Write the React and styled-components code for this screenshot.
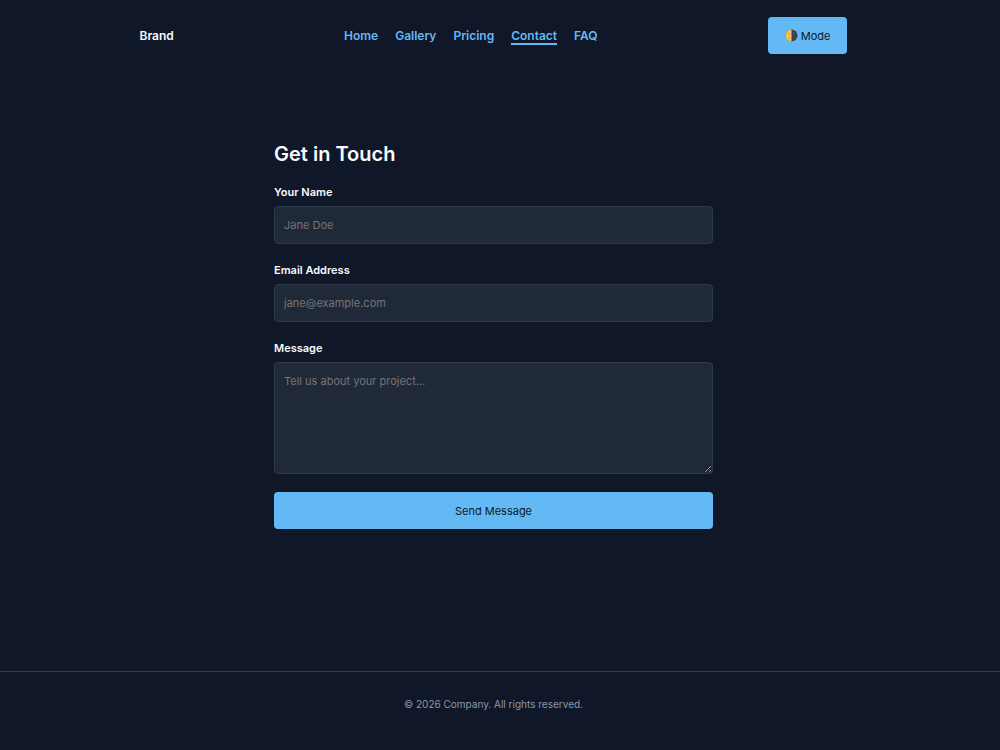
import React, { useState } from 'react';
import styled, { createGlobalStyle } from 'styled-components';

const GlobalStyle = createGlobalStyle`
* {
    box-sizing: border-box;
}
body {
    margin: 0;
    background: #101729;
    color: #f8fafc;
    font-family: Inter, "Liberation Sans", sans-serif;
    font-size: 12px;
    line-height: 18px;
}
button, input, textarea {
    font: inherit;
}
`

const Page = styled.div`
display: flex;
flex-direction: column;
min-height: 100vh;
color-scheme: ${(props) => props.$dark ? "dark" : "light"};
`

const Header = styled.header`
padding: 17px 13px 17px 0;
`

const Navbar = styled.div`
display: flex;
align-items: center;
justify-content: space-between;
width: 100%;
max-width: 708px;
margin: 0 auto;
`

const Brand = styled.div`
font-weight: 600;
`

const Nav = styled.nav`
display: flex;
gap: 17px;
`

const NavLink = styled.a`
padding-top: 2px;
color: #63b9f3;
font-weight: 600;
line-height: 14px;
text-decoration: none;
border-bottom: 2px solid ${(props) => props.$active ? "#63b9f3" : "transparent"};
`

const Button = styled.button`
display: flex;
align-items: center;
justify-content: center;
gap: 3px;
height: 37px;
padding: 0 17px;
border: none;
border-radius: 4px;
background: #63b9f3;
color: #101729;
font-size: 11px;
cursor: pointer;
`

const Main = styled.main`
flex: 1;
padding: 67px 13px 72px 0;
`

const Form = styled.form`
display: flex;
flex-direction: column;
gap: 18px;
width: 100%;
max-width: 439px;
margin: 0 auto;
`

const Title = styled.h1`
margin: 0 0 -4px;
font-size: 20px;
line-height: 32px;
font-weight: 600;
`

const Field = styled.div`
display: flex;
flex-direction: column;
gap: 5px;
`

const Label = styled.label`
font-size: 11px;
line-height: 17px;
font-weight: 600;
`

const Input = styled.input`
width: 100%;
height: 38px;
padding: 9px;
border: 1px solid #2f3a4a;
border-radius: 4px;
background: #202938;
color: #f8fafc;
font-size: 11px;

&::placeholder {
    color: #757575;
}
`

const TextArea = styled(Input)`
height: 112px;
resize: vertical;
`

const Footer = styled.footer`
padding: 24px 13px 37px 0;
border-top: 1px solid #2f3a4a;
color: #8c97a9;
font-size: 10px;
line-height: 17px;
text-align: center;
`

const links = ["Home", "Gallery", "Pricing", "Contact", "FAQ"];

function MoonIcon() {
    return (
        <svg width="13" height="13" viewBox="0 0 24 24" aria-hidden="true">
            <circle cx="12" cy="12" r="11" fill="#354052" />
            <path d="M12 1a11 11 0 0 0 0 22z" fill="#f4c84c" />
            <circle cx="7" cy="9" r="2" fill="#dca938" />
            <circle cx="8" cy="17" r="2" fill="#e2ae3c" />
            <circle cx="16" cy="8" r="2" fill="#4b5565" />
            <circle cx="17" cy="16" r="2" fill="#465062" />
        </svg>
    )
}

function App() {
    const [dark, setDark] = useState(true);

    return (
        <Page $dark={dark}>
            <GlobalStyle />
            <Header>
                <Navbar>
                    <Brand>Brand</Brand>
                    <Nav>
                        {links.map((link) => (
                            <NavLink key={link} href={"#" + link.toLowerCase()} $active={link === "Contact"}>{link}</NavLink>
                        ))}
                    </Nav>
                    <Button type="button" onClick={() => setDark(!dark)}><MoonIcon />Mode</Button>
                </Navbar>
            </Header>

            <Main>
                <Form onSubmit={(e) => e.preventDefault()}>
                    <Title>Get in Touch</Title>
                    <Field>
                        <Label htmlFor="name">Your Name</Label>
                        <Input id="name" type="text" placeholder="Jane Doe" />
                    </Field>
                    <Field>
                        <Label htmlFor="email">Email Address</Label>
                        <Input id="email" type="email" placeholder="jane@example.com" />
                    </Field>
                    <Field>
                        <Label htmlFor="message">Message</Label>
                        <TextArea as="textarea" id="message" placeholder="Tell us about your project..." />
                    </Field>
                    <Button type="submit">Send Message</Button>
                </Form>
            </Main>

            <Footer>© 2026 Company. All rights reserved.</Footer>
        </Page>
    )
}

export default App
